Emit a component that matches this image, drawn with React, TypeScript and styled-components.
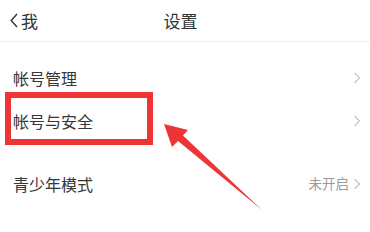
import React from "react";
import styled, { createGlobalStyle } from "styled-components";

const GlobalStyle = createGlobalStyle`
  html, body {
    margin: 0;
    padding: 0;
    background: #ffffff;
  }
  body {
    font-family: "Noto Sans CJK SC", "Noto Sans", sans-serif;
    -webkit-font-smoothing: antialiased;
  }
`;

const Page = styled.div`
  position: relative;
  width: 370px;
  height: 232px;
  overflow: hidden;
  background: #ffffff;
`;

const Header = styled.div`
  display: grid;
  grid-template-columns: 1fr auto 1fr;
  align-items: center;
  height: 41px;
  padding: 0 19px 0 10px;
  border-bottom: 1px solid #f1f1f1;
`;

const Back = styled.div`
  display: flex;
  align-items: center;
  gap: 3px;
  font-size: 17px;
  color: #333333;
  line-height: 1;
`;

const Title = styled.div`
  font-size: 17px;
  color: #333333;
  line-height: 1;
`;

const List = styled.div`
  display: flex;
  flex-direction: column;
  padding-top: 14px;
`;

const Row = styled.div<{ $gapTop?: number }>`
  position: relative;
  display: flex;
  align-items: center;
  justify-content: space-between;
  height: 43px;
  padding: 0 9px 0 13px;
  margin-top: ${(p) => p.$gapTop ?? 0}px;
`;

const Label = styled.span`
  font-size: 16px;
  color: #363636;
  line-height: 1;
`;

const Trail = styled.div`
  display: flex;
  align-items: center;
  gap: 4px;
`;

const Value = styled.span`
  font-size: 13.5px;
  color: #9a9a9a;
  line-height: 1;
`;

const Highlight = styled.div`
  position: absolute;
  left: 5px;
  top: -7px;
  width: 148px;
  height: 53px;
  box-sizing: border-box;
  border: 6px solid #ee3535;
  pointer-events: none;
`;

const Arrow = styled.svg`
  position: absolute;
  left: 0;
  top: 0;
  pointer-events: none;
`;

const Chevron = () => (
  <svg width="8" height="12" viewBox="0 0 8 12">
    <polyline points="1.5,1 6.5,6 1.5,11" fill="none" stroke="#c4c4c4" strokeWidth="1.2" />
  </svg>
);

const BackIcon = () => (
  <svg width="8" height="15" viewBox="0 0 8 15">
    <polyline points="7,1 1.2,7.5 7,14" fill="none" stroke="#333" strokeWidth="1.4" />
  </svg>
);

export default function App() {
  return (
    <>
      <GlobalStyle />
      <Page>
        <Header>
          <Back>
            <BackIcon />
            <span>我</span>
          </Back>
          <Title>设置</Title>
          <div />
        </Header>
        <List>
          <Row>
            <Label>帐号管理</Label>
            <Chevron />
          </Row>
          <Row>
            <Highlight />
            <Label>帐号与安全</Label>
            <Chevron />
          </Row>
          <Row $gapTop={20}>
            <Label>青少年模式</Label>
            <Trail>
              <Value>未开启</Value>
              <Chevron />
            </Trail>
          </Row>
        </List>
        <Arrow width="370" height="232" viewBox="0 0 370 232">
          <polygon
            points="164,124 188,130 183,135.5 262,210 178,141 172,147"
            fill="#ee3535"
          />
        </Arrow>
      </Page>
    </>
  );
}
